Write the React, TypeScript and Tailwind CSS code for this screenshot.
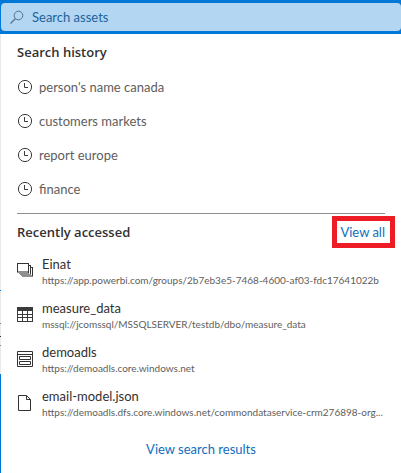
import React from "react";

const history = ["person's name canada", "customers markets", "report europe", "finance"];

function SearchIcon() {
  return (
    <svg className="h-4 w-4 shrink-0" viewBox="0 0 16 16" fill="none" stroke="#56718a" aria-hidden="true">
      <circle cx="10.5" cy="6.5" r="4.3" />
      <path d="M7.5 9.5 2.5 14.5" strokeWidth="1.3" />
    </svg>
  );
}

function ClockIcon() {
  return (
    <svg className="h-4 w-4 shrink-0" viewBox="0 0 16 16" fill="none" stroke="#3b3a39" aria-hidden="true">
      <circle cx="8" cy="8" r="6.6" />
      <path d="M7.5 4v4.5H11" />
    </svg>
  );
}

function StackIcon() {
  return (
    <svg className="h-4 w-4 shrink-0" viewBox="0 0 16 16" aria-hidden="true">
      <path d="M0 8h12v1h2v2h2v3H5v-1H4v-1H3v-1H2v-1H0z" fill="#8f8f8f" />
      <path d="M0 0h12v10h-1V8H1V9H0z" fill="#333" />
      <path d="M1 1h10v7H1z" fill="#fff" />
      <path d="M13.5 2v9M15.5 4v9" stroke="#333" />
      <path d="M12 2.5h2M14 4.5h2" stroke="#333" />
      <path d="M12 3h1v8h-1zM14 5h1v7h-1z" fill="#fff" />
    </svg>
  );
}

function TableIcon() {
  return (
    <svg className="h-4 w-4 shrink-0" viewBox="0 0 16 16" aria-hidden="true">
      <path d="M0 0h16v15H0z" fill="#3b3a39" />
      <path
        d="M1 4h4v3H1zM6 4h4v3H6zM11 4h4v3h-4zM1 8h4v2H1zM6 8h4v2H6zM11 8h4v2h-4zM1 11h4v3H1zM6 11h4v3H6zM11 11h4v3h-4z"
        fill="#fff"
      />
    </svg>
  );
}

function StorageIcon() {
  return (
    <svg className="h-4 w-4 shrink-0" viewBox="0 0 16 16" fill="none" stroke="#333" aria-hidden="true">
      <path d="M.5.5h15v15H.5zM0 3.5h16M2.5 5.5h11v3h-11zM2.5 10.5h11v3h-11z" />
    </svg>
  );
}

function FileIcon() {
  return (
    <svg className="h-4 w-4 shrink-0" viewBox="0 0 16 16" fill="none" stroke="#333" aria-hidden="true">
      <path d="M1.5.5h8l4 4v11h-12zM9.5.5v4h4" />
    </svg>
  );
}

const recent = [
  { name: "Einat", url: "https://app.powerbi.com/groups/2b7eb3e5-7468-4600-af03-fdc17641022b", Icon: StackIcon },
  { name: "measure_data", url: "mssql://jcomssql/MSSQLSERVER/testdb/dbo/measure_data", Icon: TableIcon },
  { name: "demoadls", url: "https://demoadls.core.windows.net", Icon: StorageIcon },
  { name: "email-model.json", url: "https://demoadls.dfs.core.windows.net/commondataservice-crm276898-org...", Icon: FileIcon },
];

export default function App() {
  return (
    <div className="flex min-h-screen flex-col bg-white font-['Lato','Open_Sans',sans-serif] text-[13px] leading-5 text-[#323130]">
      <header className="bg-[#0078d7] py-[3px] pl-px">
        <label className="flex h-7 items-center gap-2 rounded-sm bg-[#b3d6f2] pl-[7px]">
          <SearchIcon />
          <input
            type="text"
            placeholder="Search assets"
            aria-label="Search assets"
            className="min-w-0 flex-1 bg-transparent outline-none placeholder:text-[#20639b]"
          />
        </label>
      </header>

      <div className="flex flex-1">
        <div className="flex w-px shrink-0 flex-col bg-[#eaeaea]" aria-hidden="true">
          <div className="mt-64 h-px bg-[#0078d7]" />
          <div className="mt-8 h-px bg-[#888888]" />
          <div className="mt-3 h-px bg-[#333333]" />
          <div className="mt-2 h-px bg-[#888888]" />
          <div className="mt-7 flex-1 bg-[#0078d7]" />
        </div>

        <main className="min-w-0 flex-1 px-4 pt-2">
          <section>
            <h2 className="font-['Open_Sans',sans-serif] font-semibold">Search history</h2>
            <ul className="mt-2 border-b border-[#8f8f8f] pb-[7px]">
              {history.map((term) => (
                <li key={term}>
                  <button type="button" className="flex h-[34px] w-full items-center gap-[6px] text-left text-[#605e5c]">
                    <ClockIcon />
                    {term}
                  </button>
                </li>
              ))}
            </ul>
          </section>

          <section>
            <div className="flex items-center justify-between pt-[2px]">
              <h2 className="font-['Open_Sans',sans-serif] font-semibold">Recently accessed</h2>
              <a
                href="#all"
                className="-mr-[10px] flex h-8 items-center border-[5px] border-[#ee1c25] px-[3px] pr-[5px] text-[#106ebe]"
              >
                View all
              </a>
            </div>
            <ul className="pt-px">
              {recent.map(({ name, url, Icon }) => (
                <li key={name}>
                  <a href="#asset" className="flex h-11 items-center gap-[9px]">
                    <Icon />
                    <span className="flex min-w-0 flex-col">
                      <span className="leading-[18px]">{name}</span>
                      <span className="text-[10px] leading-[14px] whitespace-nowrap text-[#605e5c]">{url}</span>
                    </span>
                  </a>
                </li>
              ))}
            </ul>
          </section>

          <div className="pt-[14px] pb-3 text-center">
            <a href="#results" className="text-[#106ebe]">
              View search results
            </a>
          </div>
        </main>
      </div>
    </div>
  );
}
